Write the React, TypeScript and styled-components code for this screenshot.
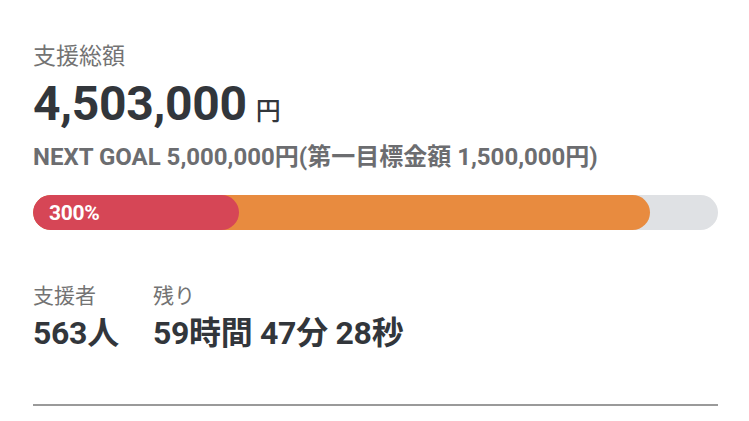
import React from "react";
import styled, { createGlobalStyle } from "styled-components";

const GlobalStyle = createGlobalStyle`
  html, body {
    margin: 0;
    padding: 0;
    background: #ffffff;
  }
  body {
    font-family: Roboto, "Noto Sans CJK JP", "Noto Sans", sans-serif;
    -webkit-font-smoothing: antialiased;
  }
`;

const Panel = styled.section`
  width: 749px;
  box-sizing: border-box;
  padding: 41px 31px 0 33px;
  display: flex;
  flex-direction: column;
`;

const Label = styled.div`
  font-size: 23px;
  line-height: 32px;
  color: #737373;
  font-weight: 400;
`;

const AmountRow = styled.div`
  margin-top: 3px;
  display: flex;
  align-items: baseline;
  gap: 9px;
  line-height: 56px;
  color: #32363b;
`;

const Amount = styled.span`
  font-size: 48px;
  font-weight: 700;
  letter-spacing: -0.3px;
`;

const Unit = styled.span`
  font-size: 25px;
  font-weight: 500;
`;

const NextGoal = styled.div`
  margin-top: 3px;
  font-size: 24px;
  line-height: 28px;
  font-weight: 700;
  color: #6c6d70;
  letter-spacing: 0;
`;

const Track = styled.div`
  margin-top: 24px;
  position: relative;
  height: 35px;
  border-radius: 18px;
  background: #dfe1e4;
  overflow: hidden;
`;

const Fill = styled.div<{ $color: string }>`
  position: absolute;
  left: 0;
  top: 0;
  bottom: 0;
  border-radius: 18px;
  background: ${(p) => p.$color};
  display: flex;
  align-items: center;
`;

const Percent = styled.span`
  padding-left: 16px;
  color: #ffffff;
  font-size: 21px;
  font-weight: 700;
  letter-spacing: -0.3px;
`;

const Stats = styled.div`
  margin-top: 52px;
  display: flex;
  gap: 34px;
`;

const Stat = styled.div`
  display: flex;
  flex-direction: column;
`;

const StatLabel = styled.div`
  font-size: 21px;
  line-height: 28px;
  color: #737373;
`;

const StatValue = styled.div`
  margin-top: 4px;
  font-size: 32px;
  line-height: 38px;
  font-weight: 700;
  color: #32363b;
  letter-spacing: -0.3px;
`;

const Divider = styled.hr`
  margin: 52px 0 0;
  border: none;
  height: 2px;
  background: #9a9a9a;
`;

export default function App() {
  const total = 4503000;
  const goal = 5000000;
  const first = 1500000;
  return (
    <>
      <GlobalStyle />
      <Panel>
        <Label>支援総額</Label>
        <AmountRow>
          <Amount>4,503,000</Amount>
          <Unit>円</Unit>
        </AmountRow>
        <NextGoal>NEXT GOAL 5,000,000円(第一目標金額 1,500,000円)</NextGoal>
        <Track>
          <Fill $color="#e88b3f" style={{ width: `${(total / goal) * 100}%` }} />
          <Fill $color="#d64656" style={{ width: `${(first / goal) * 100}%` }}>
            <Percent>300%</Percent>
          </Fill>
        </Track>
        <Stats>
          <Stat>
            <StatLabel>支援者</StatLabel>
            <StatValue>563人</StatValue>
          </Stat>
          <Stat>
            <StatLabel>残り</StatLabel>
            <StatValue>59時間 47分 28秒</StatValue>
          </Stat>
        </Stats>
        <Divider />
      </Panel>
    </>
  );
}
